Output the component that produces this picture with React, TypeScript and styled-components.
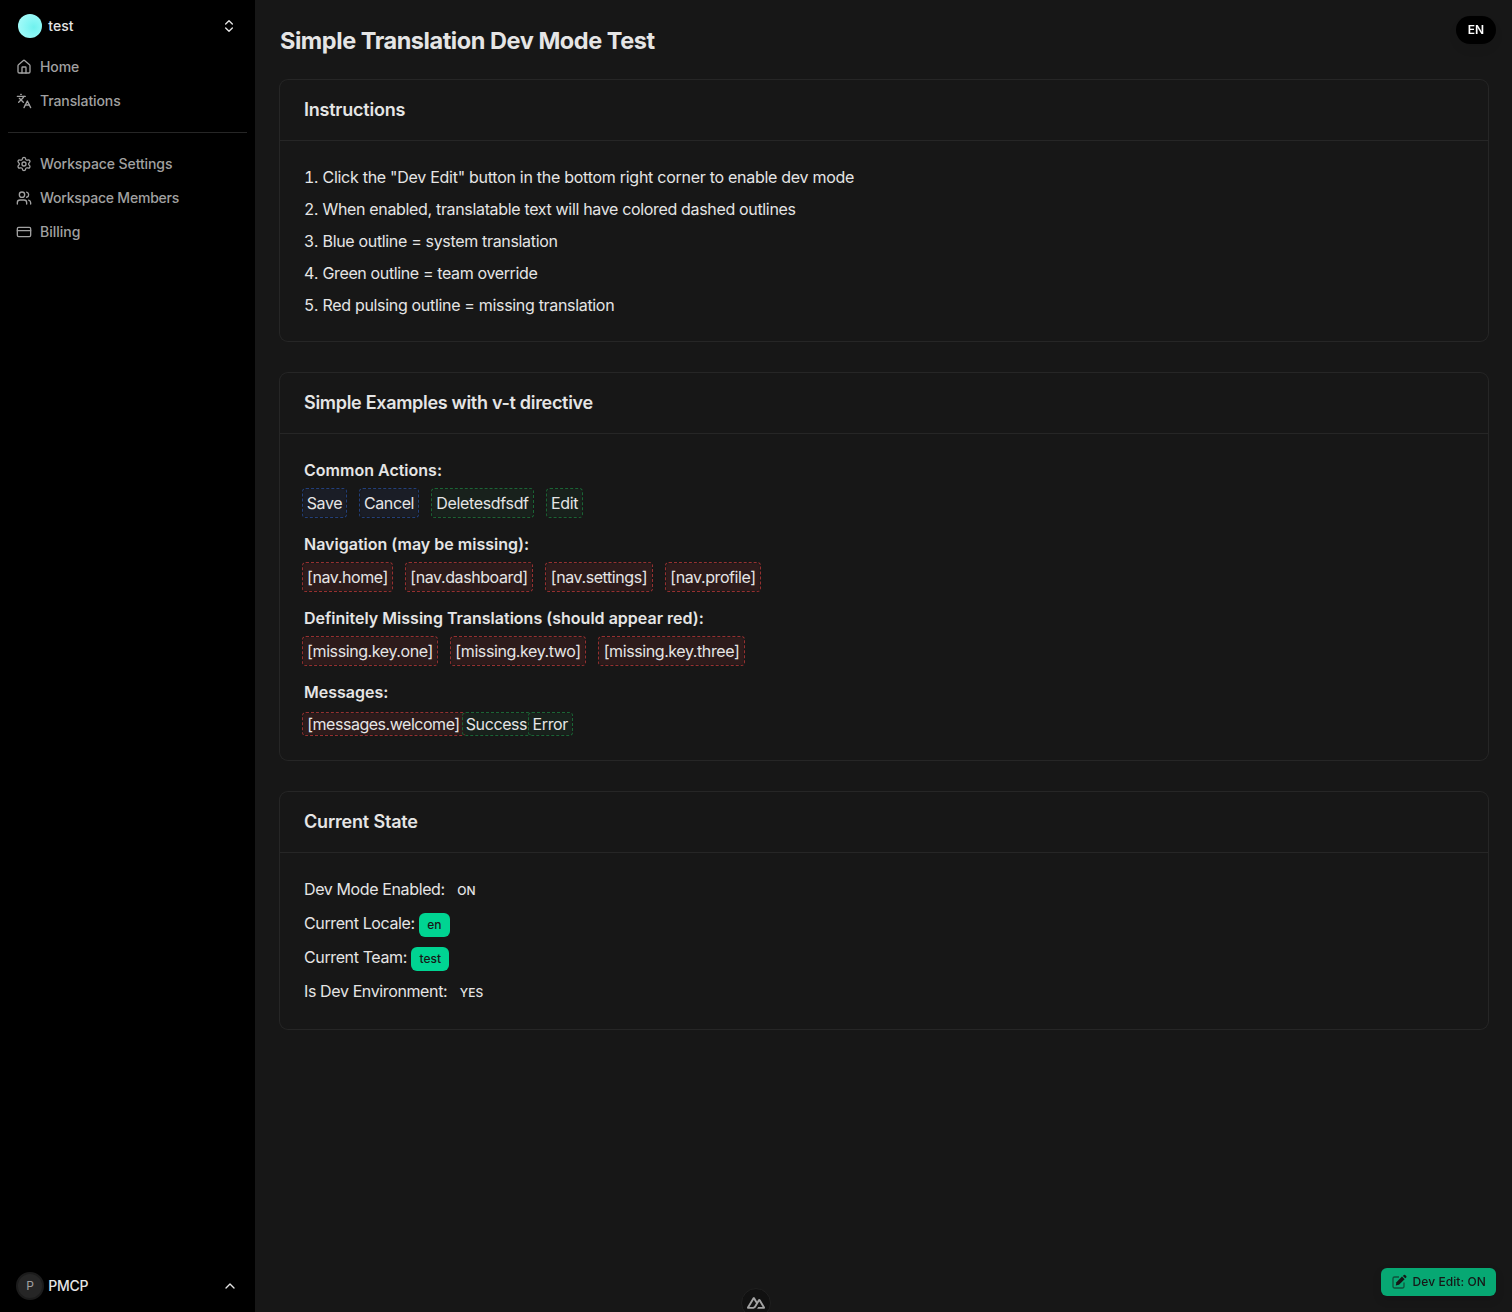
import React from 'react';
import styled, { createGlobalStyle } from 'styled-components';
import { ChevronsUpDown, ChevronUp, CreditCard, House, Languages, Settings, Users } from 'lucide-react';

const Global = createGlobalStyle`
  * { box-sizing: border-box; }
  html, body { margin: 0; background: #171717; }
  body {
    font-family: Inter, "Liberation Sans", sans-serif;
    font-size: 16px;
    line-height: 24px;
    color: #e5e5e5;
    -webkit-font-smoothing: antialiased;
  }
  button { font: inherit; border: 0; padding: 0; background: none; color: inherit; }
`;

const Shell = styled.div`
  display: flex;
  height: 1312px;
  overflow: hidden;
`;

const Sidebar = styled.aside`
  width: 255px;
  flex: none;
  display: flex;
  flex-direction: column;
  background: #000;
`;

const Account = styled.button`
  display: flex;
  align-items: center;
  gap: 6px;
  height: 32px;
  margin-top: 10px;
  padding: 0 18px;
  text-align: left;
`;

const UserAccount = styled(Account)`
  gap: 4px;
  margin: 0 0 10px;
  padding: 0 17px 0 16px;
`;

const AccountName = styled.span<{ $track?: number }>`
  flex: 1;
  font-size: 14px;
  line-height: 20px;
  font-weight: 500;
  text-indent: 0.3px;
  letter-spacing: ${(p) => p.$track ?? 0}px;
`;

const TeamAvatar = styled.span`
  width: 24px;
  height: 24px;
  border-radius: 50%;
  background: radial-gradient(circle at 66% 55%, #6ff1ee 0, #86f6f4 35%, #a0faf8 75%);
`;

const UserAvatar = styled.span`
  width: 28px;
  height: 28px;
  border-radius: 50%;
  border: 2px solid #1c1c1c;
  background: #262626;
  color: #a1a1a1;
  font-size: 12px;
  line-height: 24px;
  text-align: center;
`;

const Nav = styled.nav`
  display: flex;
  flex-direction: column;
  padding: 0 16px;
`;

const TopNav = styled(Nav)`
  margin-top: 8px;
`;

const NavItem = styled.a<{ $track?: number }>`
  display: flex;
  align-items: center;
  gap: 8px;
  height: 34px;
  font-size: 14px;
  font-weight: 450;
  letter-spacing: ${(p) => p.$track ?? -0.1}px;
  color: #a1a1a1;
`;

const Divider = styled.hr`
  width: 239px;
  height: 1px;
  margin: 14px 8px;
  border: 0;
  background: #262626;
`;

const Spacer = styled.div`
  flex: 1;
`;

const Main = styled.main`
  flex: 1;
  display: flex;
  flex-direction: column;
  padding: 25px 24px 24px 25px;
  background: #171717;
`;

const Title = styled.h1`
  margin: 0 0 23px;
  font-size: 23.5px;
  line-height: 32px;
  font-weight: 700;
  letter-spacing: -0.45px;
`;

const Card = styled.section`
  margin-bottom: 32px;
  border-radius: 8px;
  box-shadow: 0 0 0 1px #262626;
`;

const CardHeader = styled.h2<{ $track: number }>`
  height: 61px;
  margin: 0;
  padding: 0 24px;
  border-bottom: 1px solid #262626;
  font-size: 18px;
  line-height: 60px;
  font-weight: 600;
  letter-spacing: ${(p) => p.$track}px;
`;

const CardBody = styled.div<{ $gap: number }>`
  display: flex;
  flex-direction: column;
  gap: ${(p) => p.$gap}px;
  margin: 0;
  padding: 24px;
  list-style: none;
`;

const Step = styled.li<{ $track: number }>`
  display: flex;
  letter-spacing: ${(p) => p.$track}px;
`;

const StepNumber = styled.span`
  width: 18.5px;
  font-variant-numeric: tabular-nums;
`;

const GroupTitle = styled.h3`
  margin: 0 0 8px;
  font-size: 16px;
  font-weight: 600;
  letter-spacing: 0.01px;
`;

const ChipRow = styled.div<{ $joined?: boolean }>`
  display: flex;
  align-items: center;
  gap: ${(p) => (p.$joined ? 0 : 16)}px;
  height: ${(p) => (p.$joined ? 24 : 26)}px;
`;

type Tone = 'blue' | 'green' | 'red';
const tones: Record<Tone, { line: string; fill: string; track: number }> = {
  blue: { line: '#23407c', fill: '#1a1d26', track: -0.37 },
  green: { line: '#1a6535', fill: '#18211c', track: -0.34 },
  red: { line: '#963030', fill: '#2d1b1b', track: -0.41 },
};

const Chip = styled.span<{ $tone: Tone; $width: number; $short?: boolean }>`
  width: ${(p) => p.$width}px;
  height: ${(p) => (p.$short ? 20 : 26)}px;
  line-height: ${(p) => (p.$short ? 20 : 26)}px;
  border-radius: 2px;
  outline: 1px dashed ${(p) => tones[p.$tone].line};
  outline-offset: 1px;
  background: ${(p) => tones[p.$tone].fill};
  box-shadow: 0 0 0 1px ${(p) => tones[p.$tone].fill}b0;
  text-align: center;
  text-indent: ${(p) => (p.$short ? -0.6 : 0)}px;
  white-space: nowrap;
  letter-spacing: ${(p) => tones[p.$tone].track - (p.$short ? 0.06 : 0)}px;
`;

const StateRow = styled.div`
  display: flex;
  align-items: flex-start;
  gap: 4.5px;
  height: 26px;
  letter-spacing: -0.38px;
`;

const Badge = styled.span<{ $solid?: boolean }>`
  height: 24px;
  margin-top: 2px;
  padding: 0 8px;
  border-radius: 6px;
  background: ${(p) => (p.$solid ? '#00d492' : 'transparent')};
  color: ${(p) => (p.$solid ? '#171717' : '#e5e5e5')};
  font-size: 12px;
  font-weight: 500;
  letter-spacing: 0.05px;
`;

const LocaleButton = styled.button`
  position: fixed;
  top: 16px;
  right: 16px;
  width: 40px;
  height: 28px;
  border-radius: 14px;
  background: #000;
  color: #fff;
  font-size: 12px;
  font-weight: 600;
  box-shadow: 0 6px 10px rgba(0, 0, 0, 0.06);
`;

const DevButton = styled.button`
  position: fixed;
  right: 16px;
  bottom: 16px;
  display: flex;
  align-items: center;
  gap: 5.5px;
  width: 115px;
  height: 28px;
  padding-left: 10px;
  border-radius: 6px;
  background: #07a873;
  color: #171717;
  font-size: 12px;
  font-weight: 500;
  letter-spacing: 0.08px;
  white-space: nowrap;
  box-shadow: 0 4px 10px rgba(0, 0, 0, 0.12);
`;

const DevtoolsToggle = styled.button`
  position: fixed;
  left: 741px;
  top: 1288px;
  width: 30px;
  height: 30px;
  border-radius: 50%;
  border: 1px solid #202020;
  background: #111;
  display: grid;
  place-items: center;
`;

const steps: [string, number][] = [
  ['Click the "Dev Edit" button in the bottom right corner to enable dev mode', -0.276],
  ['When enabled, translatable text will have colored dashed outlines', -0.335],
  ['Blue outline = system translation', -0.33],
  ['Green outline = team override', -0.37],
  ['Red pulsing outline = missing translation', -0.32],
];

const groups: { title: string; joined?: boolean; chips: [string, Tone, number][] }[] = [
  {
    title: 'Common Actions:',
    chips: [['Save', 'blue', 41], ['Cancel', 'blue', 56], ['Deletesdfsdf', 'green', 99], ['Edit', 'green', 33]],
  },
  {
    title: 'Navigation (may be missing):',
    chips: [['[nav.home]', 'red', 87], ['[nav.dashboard]', 'red', 124], ['[nav.settings]', 'red', 104], ['[nav.profile]', 'red', 92]],
  },
  {
    title: 'Definitely Missing Translations (should appear red):',
    chips: [['[missing.key.one]', 'red', 132], ['[missing.key.two]', 'red', 132], ['[missing.key.three]', 'red', 143]],
  },
  {
    title: 'Messages:',
    joined: true,
    chips: [['[messages.welcome]', 'red', 159.5], ['Success', 'green', 66.5], ['Error', 'green', 41]],
  },
];

const state: [string, string, boolean][] = [
  ['Dev Mode Enabled:', 'ON', false],
  ['Current Locale:', 'en', true],
  ['Current Team:', 'test', true],
  ['Is Dev Environment:', 'YES', false],
];

function EditIcon() {
  return (
    <svg width="16" height="16" viewBox="0 0 16 16" fill="none">
      <path d="M8 3H3.500A1.500 1.500 0 0 0 2 4.500v8A1.500 1.500 0 0 0 3.500 14h8a1.500 1.500 0 0 0 1.500-1.500V8.500" stroke="currentColor" strokeOpacity=".6" strokeWidth="1.300" />
      <path d="M4.800 11.400l.6-3.200L11 2.600l2.600 2.600L8 10.800z" fill="currentColor" />
      <path d="M11.900 1.900l.9-.9a1 1 0 0 1 1.400 0l1 1a1 1 0 0 1 0 1.400l-.9.9z" fill="currentColor" />
    </svg>
  );
}

function NuxtIcon() {
  return (
    <svg width="18" height="18" viewBox="0 0 24 24" fill="#a3a3a3">
      <path d="M13.4642 19.8295h8.9218c.2834 0 .5618-.0723.8072-.2098a1.59 1.59 0 0 0 .5908-.5732 1.5293 1.5293 0 0 0 .2158-.783 1.529 1.529 0 0 0-.2167-.7828L17.7916 7.4142a1.5904 1.5904 0 0 0-.5907-.573 1.6524 1.6524 0 0 0-.807-.2099c-.2833 0-.5616.0724-.807.2098a1.5904 1.5904 0 0 0-.5907.5731L13.4642 9.99l-2.9954-5.0366a1.5913 1.5913 0 0 0-.591-.573 1.6533 1.6533 0 0 0-.8071-.2098c-.2834 0-.5617.0723-.8072.2097a1.5913 1.5913 0 0 0-.591.573L.2168 17.4808A1.5292 1.5292 0 0 0 0 18.2635c-.0001.2749.0744.545.2157.783a1.59 1.59 0 0 0 .5908.5732c.2454.1375.5238.2098.8072.2098h5.6003c2.219 0 3.8554-.9454 4.9813-2.7899l2.7337-4.5922 1.4645-2.4578 4.3944 7.3824h-5.8586ZM7.123 17.3694l-3.9083-.0009 5.8586-9.8421 2.9232 4.921-1.9572 3.2892c-.7478 1.1967-1.5972 1.6328-2.9163 1.6328z" />
    </svg>
  );
}

export default function App() {
  return (
    <>
      <Global />
      <Shell>
        <Sidebar>
          <Account>
            <TeamAvatar />
            <AccountName>test</AccountName>
            <ChevronsUpDown size={16} />
          </Account>
          <TopNav>
            <NavItem><House size={16} />Home</NavItem>
            <NavItem><Languages size={16} />Translations</NavItem>
          </TopNav>
          <Divider />
          <Nav>
            <NavItem><Settings size={16} />Workspace Settings</NavItem>
            <NavItem $track={-0.22}><Users size={16} />Workspace Members</NavItem>
            <NavItem $track={0}><CreditCard size={16} />Billing</NavItem>
          </Nav>
          <Spacer />
          <UserAccount>
            <UserAvatar>P</UserAvatar>
            <AccountName $track={-0.25}>PMCP</AccountName>
            <ChevronUp size={16} />
          </UserAccount>
        </Sidebar>
        <Main>
          <Title>Simple Translation Dev Mode Test</Title>
          <Card>
            <CardHeader $track={-0.22}>Instructions</CardHeader>
            <CardBody $gap={8} as="ol">
              {steps.map(([text, track], i) => (
                <Step key={text} $track={track}>
                  <StepNumber>{i + 1}.</StepNumber>
                  {text}
                </Step>
              ))}
            </CardBody>
          </Card>
          <Card>
            <CardHeader $track={-0.3}>Simple Examples with v-t directive</CardHeader>
            <CardBody $gap={16}>
              {groups.map((g) => (
                <div key={g.title}>
                  <GroupTitle>{g.title}</GroupTitle>
                  <ChipRow $joined={g.joined}>
                    {g.chips.map(([label, tone, width]) => (
                      <Chip key={label} $tone={tone} $width={width} $short={g.joined}>{label}</Chip>
                    ))}
                  </ChipRow>
                </div>
              ))}
            </CardBody>
          </Card>
          <Card>
            <CardHeader $track={-0.19}>Current State</CardHeader>
            <CardBody $gap={8}>
              {state.map(([label, value, solid]) => (
                <StateRow key={label}>
                  {label}
                  <Badge $solid={solid}>{value}</Badge>
                </StateRow>
              ))}
            </CardBody>
          </Card>
        </Main>
      </Shell>
      <LocaleButton>EN</LocaleButton>
      <DevButton>
        <EditIcon />
        Dev Edit: ON
      </DevButton>
      <DevtoolsToggle>
        <NuxtIcon />
      </DevtoolsToggle>
    </>
  );
}
